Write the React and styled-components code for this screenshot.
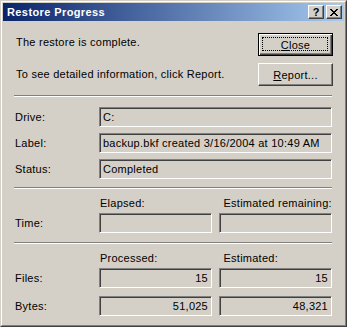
import React from "react";
import styled, { createGlobalStyle } from "styled-components";

const GlobalStyle = createGlobalStyle`
  html, body { margin: 0; padding: 0; background: #d4d0c8; }
  body {
    font-family: "Liberation Sans", Arial, sans-serif;
    font-size: 11px;
    letter-spacing: 0.25px;
    color: #000;
  }
  * { box-sizing: border-box; }
`;

const Window = styled.div`
  width: 347px;
  height: 327px;
  background: #d4d0c8;
  border: 1px solid;
  border-color: #d4d0c8 #404040 #404040 #d4d0c8;
  display: flex;
`;

const Frame = styled.div`
  flex: 1;
  border: 1px solid;
  border-color: #ffffff #808080 #808080 #ffffff;
  padding: 1px;
  display: flex;
  flex-direction: column;
`;

const TitleBar = styled.div`
  height: 18px;
  display: flex;
  align-items: center;
  padding: 0 2px 0 2px;
  background: linear-gradient(to right, #0a246a 0%, #a6caf0 100%);
`;

const Title = styled.span`
  flex: 1;
  color: #fff;
  font-weight: bold;
  font-size: 11px;
  line-height: 13px;
  padding-left: 2px;
  letter-spacing: 0.4px;
`;

const CaptionButtons = styled.div`
  display: flex;
  gap: 2px;
`;

const CaptionButton = styled.div`
  width: 16px;
  height: 14px;
  background: #d4d0c8;
  border: 1px solid;
  border-color: #ffffff #404040 #404040 #ffffff;
  box-shadow: inset -1px -1px #808080;
  display: flex;
  align-items: center;
  justify-content: center;
  font-weight: bold;
  font-size: 11px;
  line-height: 11px;
  letter-spacing: 0;
`;

const Body = styled.div`
  flex: 1;
  padding: 12px 11px 0 11px;
  display: flex;
  flex-direction: column;
`;

const TopSection = styled.div`
  display: grid;
  grid-template-columns: 1fr 75px;
  grid-template-rows: 23px 23px;
  row-gap: 7px;
`;

const Message = styled.div`
  padding-left: 2px;
  line-height: 13px;
  align-self: ${(p) => (p.$top ? "start" : "center")};
  padding-top: ${(p) => (p.$top ? "3px" : "0")};
`;

const PushButton = styled.button`
  width: 75px;
  height: 23px;
  margin: 0;
  padding: 0;
  font: inherit;
  letter-spacing: inherit;
  color: #000;
  background: #d4d0c8;
  border: 1px solid;
  border-color: ${(p) => (p.$default ? "#000" : "#ffffff #404040 #404040 #ffffff")};
  box-shadow: ${(p) =>
    p.$default
      ? "inset 1px 1px #ffffff, inset -1px -1px #404040, inset -2px -2px #808080"
      : "inset -1px -1px #808080"};
  position: relative;
  display: flex;
  align-items: center;
  justify-content: center;
  cursor: default;
`;

const FocusRing = styled.span`
  position: absolute;
  left: 3px;
  top: 3px;
  right: 4px;
  bottom: 4px;
  border: 1px dotted #000;
`;

const Separator = styled.div`
  height: 2px;
  border-top: 1px solid #808080;
  border-bottom: 1px solid #ffffff;
  margin: ${(p) => p.$m || "9px 1px 0 0"};
`;

const InfoRows = styled.div`
  display: grid;
  grid-template-columns: 85px 1fr;
  grid-auto-rows: 20px;
  row-gap: ${(p) => p.$gap || 6}px;
  margin-top: ${(p) => p.$mt || 10}px;
  margin-right: 1px;
`;

const Label = styled.div`
  padding-left: 1px;
  display: flex;
  align-items: center;
`;

const Pair = styled.div`
  display: grid;
  grid-template-columns: 1fr 1fr;
  column-gap: 7px;
`;

const HeaderRow = styled.div`
  display: grid;
  grid-template-columns: 85px 1fr 1fr;
  column-gap: 0;
  margin-top: 8px;
  margin-right: 1px;
  line-height: 13px;
`;

const Header = styled.div`
  padding-left: 1px;
  margin-left: ${(p) => (p.$second ? "7px" : "0")};
`;

const Field = styled.div`
  height: 20px;
  background: #d4d0c8;
  border: 1px solid;
  border-color: #808080 #ffffff #ffffff #808080;
  box-shadow: inset 1px 1px #404040, inset -1px -1px #d4d0c8;
  display: flex;
  align-items: center;
  justify-content: ${(p) => (p.$right ? "flex-end" : "flex-start")};
  padding: 0 3px 0 3px;
  white-space: nowrap;
  overflow: hidden;
`;

const CloseGlyph = () => (
  <svg width="8" height="7" viewBox="0 0 8 7" shapeRendering="crispEdges">
    <path
      d="M0 0h2v1h-2zM6 0h2v1h-2zM1 1h2v1h-2zM5 1h2v1h-2zM2 2h4v1h-4zM3 3h2v1h-2zM2 4h4v1h-4zM1 5h2v1h-2zM5 5h2v1h-2zM0 6h2v1h-2zM6 6h2v1h-2z"
      fill="#000"
    />
  </svg>
);

export default function App() {
  return (
    <>
      <GlobalStyle />
      <Window>
        <Frame>
          <TitleBar>
            <Title>Restore Progress</Title>
            <CaptionButtons>
              <CaptionButton>?</CaptionButton>
              <CaptionButton>
                <CloseGlyph />
              </CaptionButton>
            </CaptionButtons>
          </TitleBar>
          <Body>
            <TopSection>
              <Message $top>The restore is complete.</Message>
              <PushButton $default>
                <FocusRing />
                <span>
                  <u>C</u>lose
                </span>
              </PushButton>
              <Message>To see detailed information, click Report.</Message>
              <PushButton>
                <span>
                  <u>R</u>eport...
                </span>
              </PushButton>
            </TopSection>

            <Separator />

            <InfoRows>
              <Label>Drive:</Label>
              <Field>C:</Field>
              <Label>Label:</Label>
              <Field>backup.bkf created 3/16/2004 at 10:49 AM</Field>
              <Label>Status:</Label>
              <Field>Completed</Field>
            </InfoRows>

            <Separator $m="8px 1px 0 0" />

            <HeaderRow>
              <span />
              <Header>Elapsed:</Header>
              <Header $second>Estimated remaining:</Header>
            </HeaderRow>
            <InfoRows $mt={3}>
              <Label>Time:</Label>
              <Pair>
                <Field />
                <Field />
              </Pair>
            </InfoRows>

            <Separator $m="9px 1px 0 0" />

            <HeaderRow>
              <span />
              <Header>Processed:</Header>
              <Header $second>Estimated:</Header>
            </HeaderRow>
            <InfoRows $mt={3} $gap={8}>
              <Label>Files:</Label>
              <Pair>
                <Field $right>15</Field>
                <Field $right>15</Field>
              </Pair>
              <Label>Bytes:</Label>
              <Pair>
                <Field $right>51,025</Field>
                <Field $right>48,321</Field>
              </Pair>
            </InfoRows>
          </Body>
        </Frame>
      </Window>
    </>
  );
}
